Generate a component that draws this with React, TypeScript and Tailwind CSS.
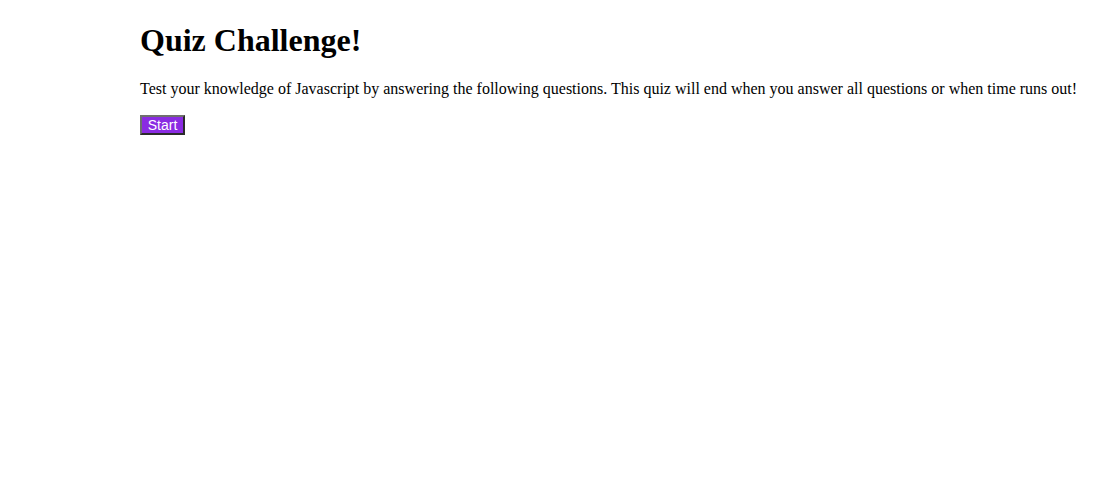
import React from 'react';

export default function App() {
  return (
    <div className="min-h-[481px] bg-white text-black" style={{ fontFamily: '"Liberation Serif", "Times New Roman", serif' }}>
      <div className="ml-[140px] pt-[22px]">
        <h1 className="text-[32px] font-bold leading-[37px]">Quiz Challenge!</h1>
        <p className="mt-[21px] text-base leading-[18px]">
          Test your knowledge of Javascript by answering the following questions. This quiz will end when you answer all questions or when time runs out!
        </p>
        <button
          className="mt-[17px] h-[20px] w-[45px] bg-[#8a2be2] text-white text-[14px] leading-[15px] border-2 border-t-[#6f6f6f] border-l-[#6f6f6f] border-b-[#2b2b2b] border-r-[#2b2b2b]"
          style={{ fontFamily: '"Liberation Sans", Arial, sans-serif' }}
        >
          Start
        </button>
      </div>
    </div>
  );
}
